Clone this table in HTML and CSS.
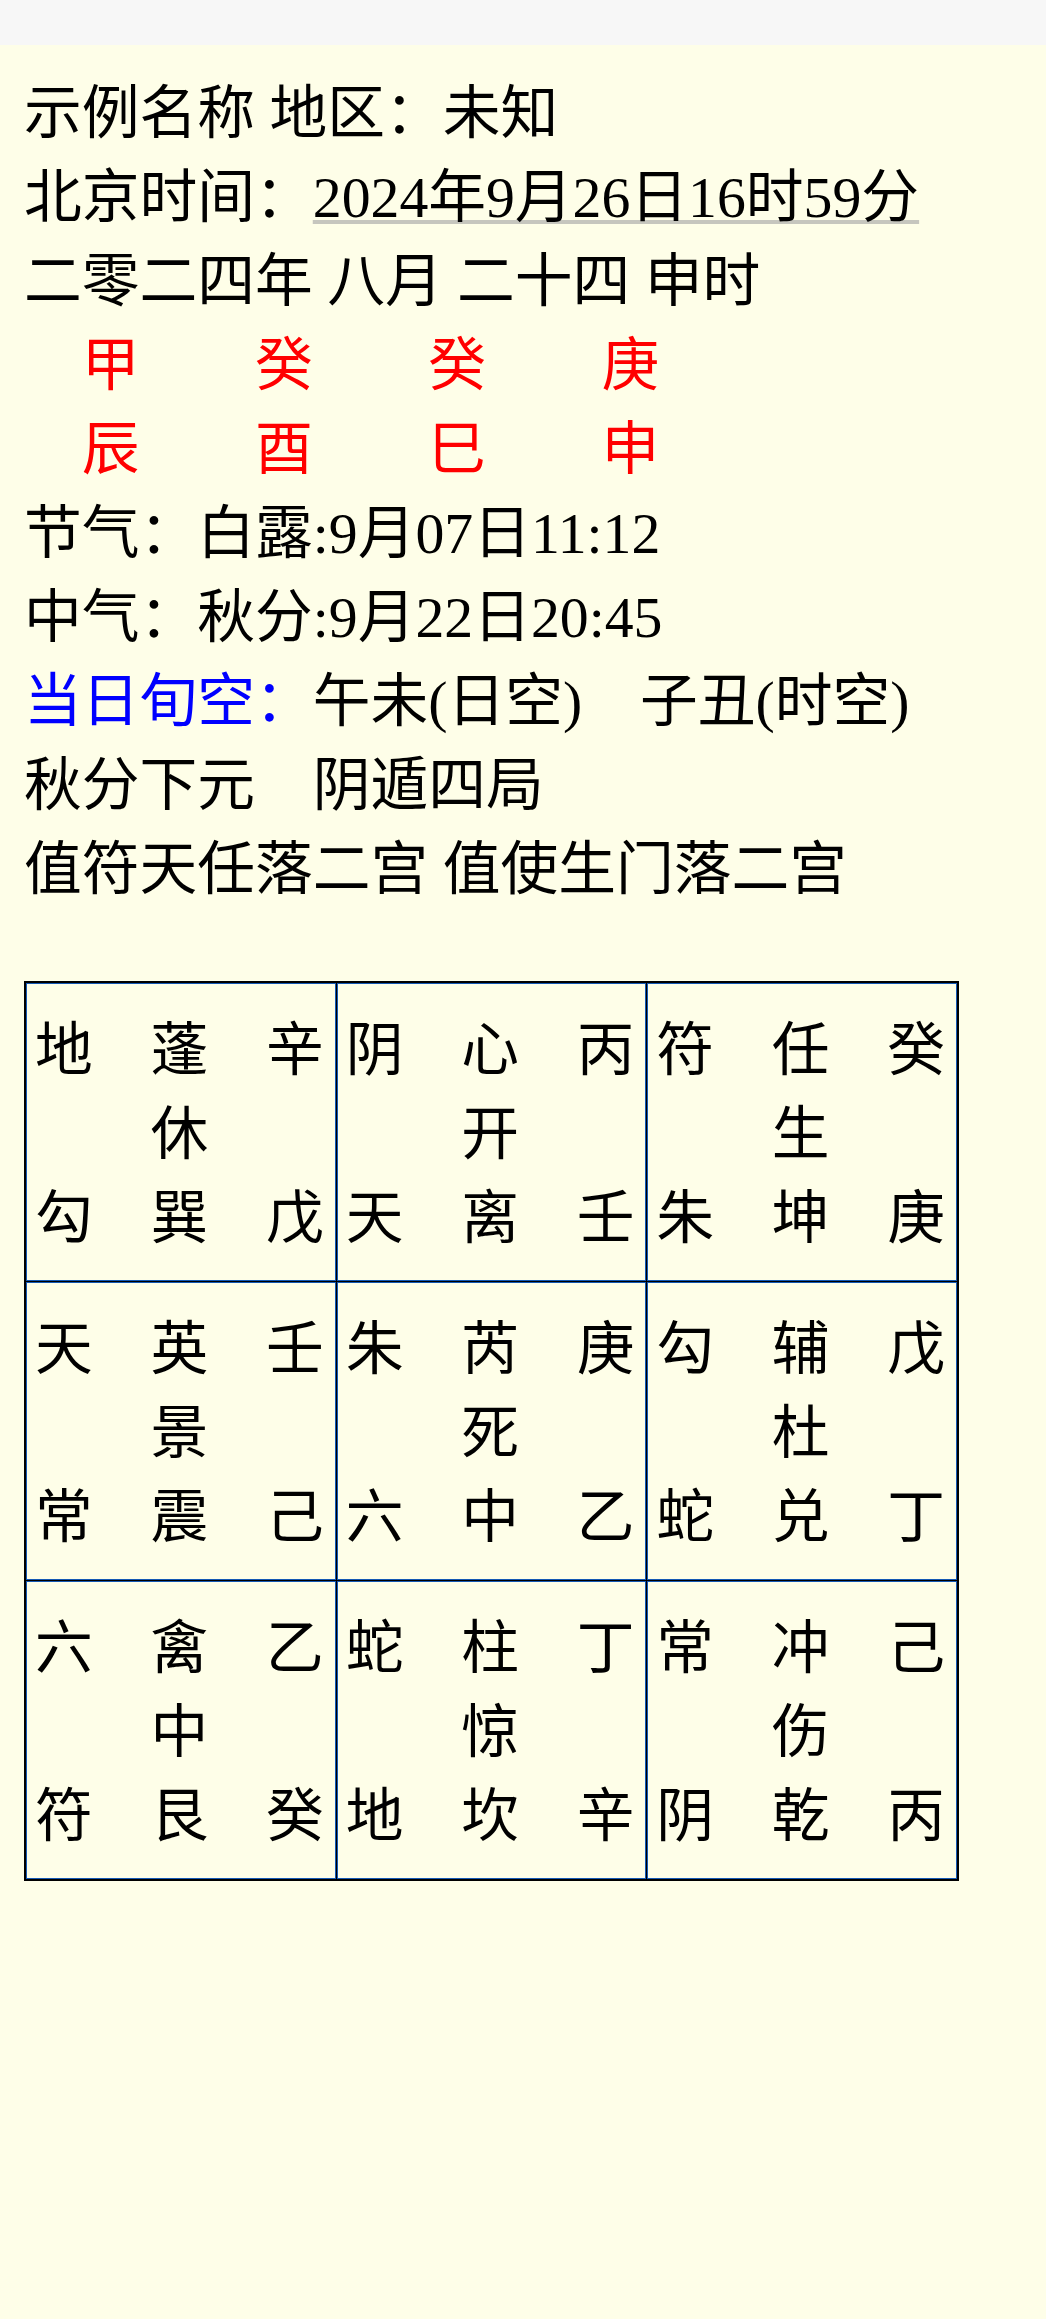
FILE: index.html
```html
<!DOCTYPE html>
<html lang="zh-CN">
<head>
<meta charset="utf-8">
<title>奇门遁甲排盘</title>
<link rel="stylesheet" href="styles.css">
</head>
<body>
<div class="topbar"></div>
<main class="page">
  <section class="info">
    <p class="line">示例名称 地区：未知</p>
    <p class="line">北京时间：<span class="date">2024年9月26日16时59分</span></p>
    <p class="line">二零二四年 八月 二十四 申时</p>
    <div class="line pillars"><span>甲</span><span>癸</span><span>癸</span><span>庚</span></div>
    <div class="line pillars"><span>辰</span><span>酉</span><span>巳</span><span>申</span></div>
    <p class="line">节气：白露:9月07日11:12</p>
    <p class="line">中气：秋分:9月22日20:45</p>
    <p class="line"><span class="label">当日旬空：</span>午未(日空)　子丑(时空)</p>
    <p class="line">秋分下元　阴遁四局</p>
    <p class="line">值符天任落二宫 值使生门落二宫</p>
  </section>

  <table class="pan">
    <tr>
      <td><div class="cell"><span>地</span><span>蓬</span><span>辛</span><span></span><span>休</span><span></span><span>勾</span><span>巽</span><span>戊</span></div></td>
      <td><div class="cell"><span>阴</span><span>心</span><span>丙</span><span></span><span>开</span><span></span><span>天</span><span>离</span><span>壬</span></div></td>
      <td><div class="cell"><span>符</span><span>任</span><span>癸</span><span></span><span>生</span><span></span><span>朱</span><span>坤</span><span>庚</span></div></td>
    </tr>
    <tr>
      <td><div class="cell"><span>天</span><span>英</span><span>壬</span><span></span><span>景</span><span></span><span>常</span><span>震</span><span>己</span></div></td>
      <td><div class="cell"><span>朱</span><span>芮</span><span>庚</span><span></span><span>死</span><span></span><span>六</span><span>中</span><span>乙</span></div></td>
      <td><div class="cell"><span>勾</span><span>辅</span><span>戊</span><span></span><span>杜</span><span></span><span>蛇</span><span>兑</span><span>丁</span></div></td>
    </tr>
    <tr>
      <td><div class="cell"><span>六</span><span>禽</span><span>乙</span><span></span><span>中</span><span></span><span>符</span><span>艮</span><span>癸</span></div></td>
      <td><div class="cell"><span>蛇</span><span>柱</span><span>丁</span><span></span><span>惊</span><span></span><span>地</span><span>坎</span><span>辛</span></div></td>
      <td><div class="cell"><span>常</span><span>冲</span><span>己</span><span></span><span>伤</span><span></span><span>阴</span><span>乾</span><span>丙</span></div></td>
    </tr>
  </table>
</main>
</body>
</html>
```
FILE: styles.css
```css
html, body {
  margin: 0;
  padding: 0;
}

body {
  background: #fefee8;
  color: #000;
  font-family: "Liberation Serif", "Noto Sans CJK SC", serif;
  font-size: 57.75px;
  line-height: 84px;
  min-height: 2319px;
}

.topbar {
  height: 45px;
  background: #f7f7f7;
}

.page {
  padding: 27px 0 0 24px;
}

.info {
  display: flex;
  flex-direction: column;
}

.line {
  margin: 0;
  height: 84px;
  white-space: nowrap;
}

.date {
  text-decoration: underline;
  text-decoration-color: #c6c6be;
  text-decoration-thickness: 4px;
  text-underline-offset: 3px;
}

.pillars {
  display: grid;
  grid-template-columns: repeat(4, 1em);
  column-gap: 2em;
  padding-left: 1em;
  color: #ff0000;
}

.label {
  color: #0000ff;
}

.pan {
  margin-top: 69px;
  width: 935px;
  table-layout: fixed;
  border-collapse: separate;
  border-spacing: 1px;
  border: 1px solid #000;
  background: #000;
}

.pan td {
  height: 296px;
  padding: 0 0 0 8px;
  border: 1px solid #1458b4;
  background: #fefee8;
  vertical-align: middle;
}

.cell {
  display: grid;
  grid-template-columns: repeat(3, 1em);
  column-gap: 1em;
  line-height: 84px;
  padding-top: 6px;
}

.cell span {
  height: 84px;
}
```
